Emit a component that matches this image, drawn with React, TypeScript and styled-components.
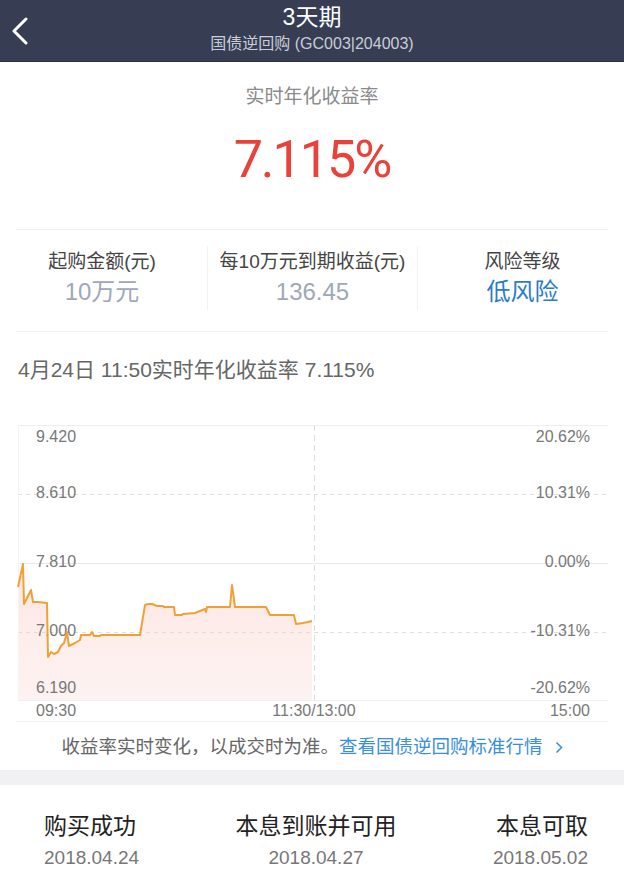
import React from "react";
import styled, { createGlobalStyle } from "styled-components";

const GlobalStyle = createGlobalStyle`
  body {
    margin: 0;
    background: #ffffff;
    font-family: "Liberation Sans", "Noto Sans CJK SC", sans-serif;
  }
`;

const Page = styled.div`
  width: 624px;
  min-height: 879px;
  background: #ffffff;
  overflow: hidden;
`;

const NavBar = styled.div`
  display: grid;
  grid-template-columns: 56px 1fr 56px;
  height: 62px;
  background: #373d53;
  border-bottom: 1px solid #2c3144;
  box-sizing: border-box;
`;

const BackButton = styled.div`
  display: flex;
  align-items: center;
  padding-left: 11px;
`;

const NavTitle = styled.div`
  display: flex;
  flex-direction: column;
  align-items: center;
  padding-top: 3px;
`;

const Title = styled.div`
  color: #ffffff;
  font-size: 23px;
  line-height: 28px;
`;

const SubTitle = styled.div`
  color: #c9cdd8;
  font-size: 16px;
  line-height: 20px;
  margin-top: 3px;
`;

const RateHead = styled.div`
  padding-top: 23px;
  text-align: center;
  color: #8a8a8a;
  font-size: 19px;
  line-height: 24px;
`;

const Rate = styled.div`
  margin: 21px 0 39px;
  text-align: center;
  color: #e8433b;
  font-family: Roboto, "Liberation Sans", sans-serif;
  font-size: 52px;
  line-height: 60px;
  letter-spacing: -2px;
`;

const StatSection = styled.div`
  margin: 0 16px;
  padding: 16px 0 21px;
  border-top: 1px solid #f0f0f0;
  border-bottom: 1px solid #f0f0f0;
`;

const StatRow = styled.div`
  display: grid;
  grid-template-columns: repeat(3, 1fr);
  margin: 0 -19px;
`;

const Stat = styled.div`
  display: flex;
  flex-direction: column;
  align-items: center;
  padding: 4px 0;
  & + & {
    border-left: 1px solid #f2f2f4;
  }
`;

const StatLabel = styled.div`
  color: #444444;
  font-size: 19px;
  line-height: 24px;
`;

const StatValue = styled.div<{ $accent?: boolean }>`
  margin-top: 4px;
  color: ${({ $accent }) => ($accent ? "#2a7bc9" : "#9ea8b8")};
  font-size: 24px;
  line-height: 28px;
`;

const ChartHead = styled.div`
  padding: 25px 18px 42px;
  color: #666666;
  font-size: 21px;
  line-height: 26px;
`;

const ChartBox = styled.div`
  height: 297px;
  svg {
    display: block;
  }
`;

const Notice = styled.div`
  display: flex;
  justify-content: center;
  align-items: center;
  padding: 13px 0 11px;
  color: #666666;
  font-size: 18.5px;
  line-height: 24px;
`;

const NoticeLink = styled.span`
  display: inline-flex;
  align-items: center;
  color: #3a8fdc;
  svg {
    margin-left: 12px;
  }
`;

const Band = styled.div`
  height: 15px;
  background: #f1f1f3;
`;

const Steps = styled.div`
  display: grid;
  grid-template-columns: repeat(3, 1fr);
  padding: 26px 36px 0 44px;
`;

const Step = styled.div<{ $align: "flex-start" | "center" | "flex-end" }>`
  display: flex;
  flex-direction: column;
  align-items: ${({ $align }) => $align};
`;

const StepLabel = styled.div`
  color: #222222;
  font-size: 23px;
  line-height: 30px;
`;

const StepDate = styled.div`
  margin-top: 5px;
  color: #777777;
  font-size: 19px;
  line-height: 24px;
`;

const stats = [
  { label: "起购金额(元)", value: "10万元" },
  { label: "每10万元到期收益(元)", value: "136.45" },
  { label: "风险等级", value: "低风险", accent: true },
];

const steps: { label: string; date: string; align: "flex-start" | "center" | "flex-end" }[] = [
  { label: "购买成功", date: "2018.04.24", align: "flex-start" },
  { label: "本息到账并可用", date: "2018.04.27", align: "center" },
  { label: "本息可取", date: "2018.05.02", align: "flex-end" },
];

// page coordinates of the yield line, chart top sits at y=423
const points: [number, number][] = [
  [18, 585], [23, 562], [24, 602], [31, 588], [33, 600], [38, 600], [47, 601],
  [48, 655], [51, 650], [54, 652], [58, 650], [61, 644], [64, 641], [66, 634],
  [67, 630], [69, 644], [75, 641], [80, 638], [81, 633], [90, 633], [92, 630],
  [94, 634], [100, 634], [101, 633], [140, 633], [145, 603], [148, 602],
  [152, 602], [157, 604], [163, 604], [164, 605], [174, 605], [175, 613],
  [182, 613], [183, 612], [195, 611], [200, 609], [205, 607], [206, 610],
  [207, 605], [230, 605], [232, 583], [235, 605], [266, 605], [270, 613],
  [294, 613], [296, 622], [303, 621], [308, 620], [312, 619],
];

const TOP = 423;
const BOTTOM = 275;

const leftAxis = [
  { text: "9.420", y: 13 },
  { text: "8.610", y: 69 },
  { text: "7.810", y: 138 },
  { text: "7.000", y: 207 },
  { text: "6.190", y: 264 },
];
const rightAxis = ["20.62%", "10.31%", "0.00%", "-10.31%", "-20.62%"];

const YieldChart = () => {
  const line = points.map(([x, y], i) => `${i ? "L" : "M"}${x} ${y - TOP}`).join(" ");
  const last = points[points.length - 1];
  const area = `${line} L${last[0]} ${BOTTOM} L${points[0][0]} ${BOTTOM} Z`;
  const label = { fontSize: 16, fill: "#787878", fontFamily: '"Liberation Sans", sans-serif' };

  return (
    <svg width="624" height="297" viewBox="0 0 624 297">
      <defs>
        <linearGradient id="fill" x1="0" y1="0" x2="0" y2="1">
          <stop offset="0" stopColor="#fde6e3" />
          <stop offset="1" stopColor="#fdf3f2" />
        </linearGradient>
      </defs>
      <path d={area} fill="url(#fill)" />
      <line x1="18" y1="0.5" x2="608" y2="0.5" stroke="#eeeeee" />
      <line x1="18" y1="138.5" x2="608" y2="138.5" stroke="#e8e8ee" />
      <line x1="18" y1="275.5" x2="608" y2="275.5" stroke="#eeeeee" />
      <line x1="18" y1="69.5" x2="608" y2="69.5" stroke="#dedede" strokeDasharray="4 4" />
      <line x1="18" y1="207.5" x2="608" y2="207.5" stroke="#dedede" strokeDasharray="4 4" />
      <line x1="18.5" y1="0" x2="18.5" y2="275" stroke="#f4f4f4" />
      <line x1="314.5" y1="0" x2="314.5" y2="275" stroke="#dedede" strokeDasharray="6 4" />
      {leftAxis.map((a) => (
        <text key={a.text} x="36" y={a.y} dominantBaseline="middle" {...label}>
          {a.text}
        </text>
      ))}
      {rightAxis.map((t, i) => (
        <text key={t} x="590" y={leftAxis[i].y} dominantBaseline="middle" textAnchor="end" {...label}>
          {t}
        </text>
      ))}
      <path d={line} fill="none" stroke="#f0a136" strokeWidth="2" strokeLinejoin="round" />
      <text x="36" y="287" dominantBaseline="middle" {...label}>09:30</text>
      <text x="314" y="287" dominantBaseline="middle" textAnchor="middle" {...label}>11:30/13:00</text>
      <text x="590" y="287" dominantBaseline="middle" textAnchor="end" {...label}>15:00</text>
      <line x1="16" y1="296.5" x2="608" y2="296.5" stroke="#efefef" />
    </svg>
  );
};

const App = () => (
  <Page>
    <GlobalStyle />
    <NavBar>
      <BackButton>
        <svg width="18" height="28" viewBox="0 0 18 28">
          <path d="M15 2 L3 14 L15 26" fill="none" stroke="#ffffff" strokeWidth="3" strokeLinecap="round" strokeLinejoin="round" />
        </svg>
      </BackButton>
      <NavTitle>
        <Title>3天期</Title>
        <SubTitle>国债逆回购 (GC003|204003)</SubTitle>
      </NavTitle>
      <div />
    </NavBar>

    <RateHead>实时年化收益率</RateHead>
    <Rate>7.115%</Rate>

    <StatSection>
      <StatRow>
        {stats.map((s) => (
          <Stat key={s.label}>
            <StatLabel>{s.label}</StatLabel>
            <StatValue $accent={s.accent}>{s.value}</StatValue>
          </Stat>
        ))}
      </StatRow>
    </StatSection>

    <ChartHead>4月24日 11:50实时年化收益率 7.115%</ChartHead>
    <ChartBox>
      <YieldChart />
    </ChartBox>

    <Notice>
      收益率实时变化，以成交时为准。
      <NoticeLink>
        查看国债逆回购标准行情
        <svg width="8" height="13" viewBox="0 0 8 13">
          <path d="M1.5 1.5 L6.5 6.5 L1.5 11.5" fill="none" stroke="#3a8fdc" strokeWidth="1.5" />
        </svg>
      </NoticeLink>
    </Notice>

    <Band />

    <Steps>
      {steps.map((s) => (
        <Step key={s.label} $align={s.align}>
          <StepLabel>{s.label}</StepLabel>
          <StepDate>{s.date}</StepDate>
        </Step>
      ))}
    </Steps>
  </Page>
);

export default App;
